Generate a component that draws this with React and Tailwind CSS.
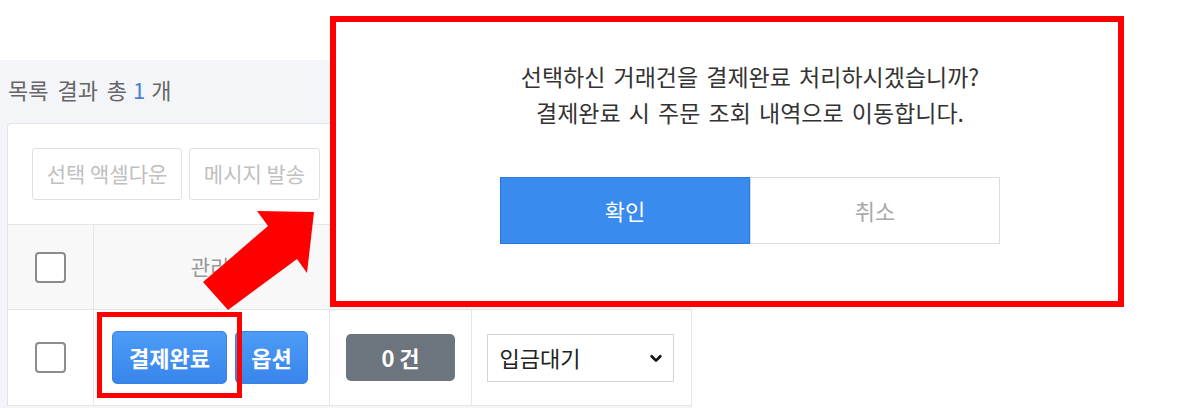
import React from 'react';

const font = { fontFamily: '"Noto Sans CJK KR", "Noto Sans", sans-serif' };

function CheckBox() {
  return <div className="w-[31px] h-[31px] rounded-[4px] border-2 border-[#8c8c8c] bg-white" />;
}

function ConfirmModal() {
  return (
    <div className="absolute left-[330px] top-[16px] w-[794px] h-[291px] border-[6px] border-[#ff0000] bg-white">
      <div className="flex flex-col items-center pl-[46px] pt-[36px]">
        <p className="text-[23px] leading-[36px] text-[#333] text-center [word-spacing:3px]">
          선택하신 거래건을 결제완료 처리하시겠습니까?
          <br />
          결제완료 시 주문 조회 내역으로 이동합니다.
        </p>
        <div className="flex mt-[47px]">
          <button className="w-[250px] h-[67px] bg-[#3a8bee] border border-[#2b7ad9] text-white text-[22px]">
            확인
          </button>
          <button className="w-[250px] h-[67px] bg-white border border-[#dcdcdc] text-[#a8a8a8] text-[22px]">
            취소
          </button>
        </div>
      </div>
    </div>
  );
}

export default function App() {
  return (
    <div className="relative w-[1179px] h-[408px] bg-white overflow-hidden" style={font}>
      <div className="pt-[60px] w-[692px]">
        <div className="bg-[#f3f5f8] h-[348px] pl-[7px]">
          {/* result count */}
          <div className="h-[63px] flex items-center pb-[4px] pl-[1px] text-[22px] text-[#666] [word-spacing:4px]">
            목록 결과 총 <span className="text-[#4a7fd6] mx-[6px]">1</span> 개
          </div>

          <div className="bg-white border-l border-t border-[#e1e4e8] rounded-tl-[4px]">
            {/* toolbar */}
            <div className="h-[100px] flex gap-[7px] pl-[24px] pt-[24px]">
              <button className="w-[150px] h-[52px] border border-[#e0e0e0] rounded-[3px] text-[21px] text-[#c0c0c0] bg-white">
                선택 액셀다운
              </button>
              <button className="w-[131px] h-[52px] border border-[#e0e0e0] rounded-[3px] text-[21px] text-[#c0c0c0] bg-white">
                메시지 발송
              </button>
            </div>

            {/* table header */}
            <div className="grid grid-cols-[86px_236px_142px_1fr] h-[85px] bg-[#f8f8f8] border-t border-[#e6e6e6]">
              <div className="flex items-center justify-center border-r border-[#e6e6e6]">
                <CheckBox />
              </div>
              <div className="flex items-center justify-center pr-[4px] text-[21px] text-[#999]">관리</div>
              <div />
              <div />
            </div>

            {/* table row */}
            <div className="grid grid-cols-[86px_236px_142px_1fr] h-[97px] border-t border-b border-[#e6e6e6]">
              <div className="flex items-center justify-center border-r border-[#e6e6e6]">
                <CheckBox />
              </div>
              <div className="flex items-center gap-[8px] pl-[18px] border-r border-[#e6e6e6]">
                <button className="w-[115px] h-[53px] rounded-[5px] bg-gradient-to-b from-[#4d9cf6] to-[#3985ec] border border-[#3a82e0] text-white text-[22px] font-bold">
                  결제완료
                </button>
                <button className="w-[73px] h-[53px] rounded-[5px] bg-gradient-to-b from-[#4d9cf6] to-[#3985ec] border border-[#3a82e0] text-white text-[22px] font-bold">
                  옵션
                </button>
              </div>
              <div className="flex items-center justify-center border-r border-[#e6e6e6]">
                <div className="w-[109px] h-[47px] rounded-[5px] bg-[#6c757d] flex items-center justify-center text-white text-[22px] font-bold">
                  0 건
                </div>
              </div>
              <div className="flex items-center justify-center pr-[3px] border-r border-[#e6e6e6]">
                <div className="w-[187px] h-[48px] border border-[#d4d4d4] bg-white flex items-center justify-between pl-[12px] pr-[10px] text-[22px] text-[#222]">
                  <span>입금대기</span>
                  <svg width="14" height="14" viewBox="0 0 16 16" fill="none" stroke="#111" strokeWidth="3" strokeLinecap="round" strokeLinejoin="round">
                    <path d="M3 6l5 5 5-5" />
                  </svg>
                </div>
              </div>
            </div>
          </div>
        </div>
      </div>

      <ConfirmModal />

      {/* annotation arrow */}
      <svg className="absolute left-0 top-0 pointer-events-none" width="1179" height="408">
        <polygon
          points="314,212 257,211 268,226 203,282 228,310 297,259 307,273"
          fill="#ff0000"
        />
      </svg>

      {/* highlight box */}
      <div className="absolute left-[97px] top-[312px] w-[145px] h-[86px] border-[5px] border-[#ff0000] pointer-events-none" />
    </div>
  );
}
